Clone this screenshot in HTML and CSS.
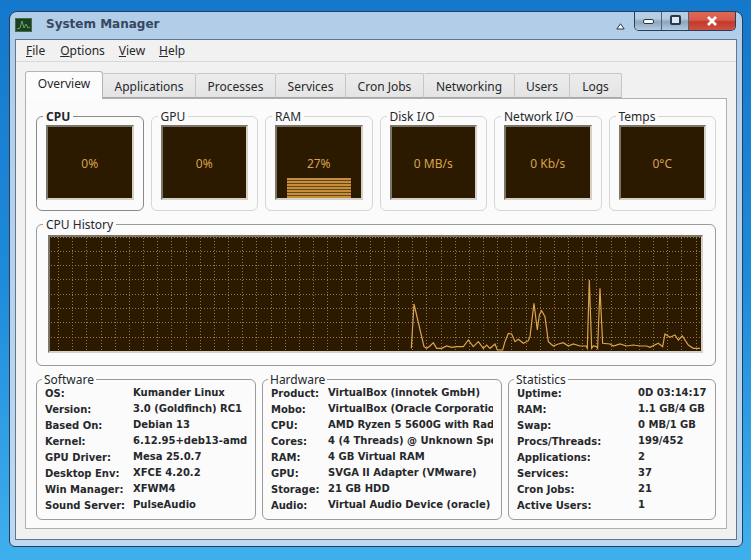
FILE: index.html
```html
<!DOCTYPE html>
<html lang="en">
<head>
    <meta charset="UTF-8">
    <title>System Manager</title>
    <link rel="stylesheet" href="styles.css">
</head>
<body>
    <div class="window">
        <header class="titlebar">
            <svg class="app-icon" width="17" height="14" viewBox="0 0 17 14">
                <rect width="17" height="14" fill="#3f6b45"/>
                <rect x="1" y="1" width="15" height="12" fill="#1d3d24"/>
                <polyline points="2,11 5,10 7,3 9,10 11,6 13,10 15,9" fill="none" stroke="#5fae5f" stroke-width="1"/>
            </svg>
            <span class="title">System Manager</span>
            <svg class="rollup" width="9" height="7" viewBox="0 0 9 7">
                <path d="M4.5 .8 8.2 6H.8z" fill="#fff" stroke="#26384c" stroke-width="1"/>
            </svg>
            <div class="controls">
                <button class="ctl"><span class="ctl-min"></span></button>
                <button class="ctl"><span class="ctl-max"></span></button>
                <button class="ctl ctl-close">
                    <svg width="12" height="10" viewBox="0 0 12 10">
                        <path d="M2 1 10 9M10 1 2 9" stroke="#fff" stroke-width="2.6"/>
                    </svg>
                </button>
            </div>
        </header>

        <div class="client">
            <nav class="menubar">
                <a><u>F</u>ile</a>
                <a><u>O</u>ptions</a>
                <a><u>V</u>iew</a>
                <a><u>H</u>elp</a>
            </nav>

            <div class="tabs">
                <button class="tab active">Overview</button>
                <button class="tab w-apps">Applications</button>
                <button class="tab w-proc">Processes</button>
                <button class="tab w-serv">Services</button>
                <button class="tab w-cron">Cron Jobs</button>
                <button class="tab w-net">Networking</button>
                <button class="tab w-users">Users</button>
                <button class="tab w-logs">Logs</button>
            </div>

            <main class="panel">
                <section class="gauges">
                    <fieldset class="group focus">
                        <legend>CPU</legend>
                        <div class="gauge"><span>0%</span></div>
                    </fieldset>
                    <fieldset class="group">
                        <legend>GPU</legend>
                        <div class="gauge"><span>0%</span></div>
                    </fieldset>
                    <fieldset class="group">
                        <legend>RAM</legend>
                        <div class="gauge"><div class="level"></div><span>27%</span></div>
                    </fieldset>
                    <fieldset class="group">
                        <legend>Disk I/O</legend>
                        <div class="gauge"><span>0 MB/s</span></div>
                    </fieldset>
                    <fieldset class="group">
                        <legend>Network I/O</legend>
                        <div class="gauge"><span>0 Kb/s</span></div>
                    </fieldset>
                    <fieldset class="group">
                        <legend>Temps</legend>
                        <div class="gauge"><span>0°C</span></div>
                    </fieldset>
                </section>

                <fieldset class="group history">
                    <legend>CPU History</legend>
                    <div class="chart">
                        <svg width="651" height="114" viewBox="2 2 651 114">
                            <path fill="none" stroke="#987840" stroke-dasharray="1 2"
                                d="M10.5 0V118M24.5 0V118M38.5 0V118M53.5 0V118M67.5 0V118M81.5 0V118M95.5 0V118M109.5 0V118M123.5 0V118M138.5 0V118M152.5 0V118M166.5 0V118M180.5 0V118M194.5 0V118M208.5 0V118M223.5 0V118M237.5 0V118M251.5 0V118M265.5 0V118M279.5 0V118M293.5 0V118M308.5 0V118M322.5 0V118M336.5 0V118M350.5 0V118M364.5 0V118M378.5 0V118M393.5 0V118M407.5 0V118M421.5 0V118M435.5 0V118M449.5 0V118M463.5 0V118M478.5 0V118M492.5 0V118M506.5 0V118M520.5 0V118M534.5 0V118M548.5 0V118M563.5 0V118M577.5 0V118M591.5 0V118M605.5 0V118M619.5 0V118M633.5 0V118M648.5 0V118
                                   M0 2.5H655M0 16.5H655M0 30.5H655M0 44.5H655M0 59.5H655M0 73.5H655M0 87.5H655M0 102.5H655M0 116.5H655"/>
                            <!-- traced from the history, x/y are at 3x -->
                            <polyline transform="translate(332 -15) scale(.3333)" vector-effect="non-scaling-stroke" fill="none" stroke="#dca44e" stroke-width="1.2"
                                points="94,385 102,252 132,380 140,385 150,378 160,368 170,385 185,385 200,378 215,382 230,380 250,380 265,360 280,380 295,365 310,385 320,375 330,385 345,372 352,390 368,390 375,365 385,340 395,342 405,365 415,358 430,370 445,362 450,350 462,250 472,330 478,285 485,272 495,290 505,365 520,378 535,372 550,368 565,378 580,372 600,378 618,378 622,385 628,180 635,385 640,378 650,380 653,385 660,205 668,370 690,372 700,378 720,372 740,378 760,375 780,378 800,378 810,382 835,370 848,380 855,342 870,352 885,345 895,360 907,348 925,375 940,385 960,385"/>
                        </svg>
                    </div>
                </fieldset>

                <section class="details">
                    <fieldset class="group info-group">
                        <legend>Software</legend>
                        <div class="info info-sw">
                            <b>OS:</b><span>Kumander Linux</span>
                            <b>Version:</b><span>3.0 (Goldfinch) RC1</span>
                            <b>Based On:</b><span>Debian 13</span>
                            <b>Kernel:</b><span>6.12.95+deb13-amd</span>
                            <b>GPU Driver:</b><span>Mesa 25.0.7</span>
                            <b>Desktop Env:</b><span>XFCE 4.20.2</span>
                            <b>Win Manager:</b><span>XFWM4</span>
                            <b>Sound Server:</b><span>PulseAudio</span>
                        </div>
                    </fieldset>
                    <fieldset class="group info-group">
                        <legend>Hardware</legend>
                        <div class="info info-hw">
                            <b>Product:</b><span>VirtualBox (innotek GmbH)</span>
                            <b>Mobo:</b><span>VirtualBox (Oracle Corporation)</span>
                            <b>CPU:</b><span>AMD Ryzen 5 5600G with Radeon Graphics</span>
                            <b>Cores:</b><span>4 (4 Threads) @ Unknown Speed</span>
                            <b>RAM:</b><span>4 GB Virtual RAM</span>
                            <b>GPU:</b><span>SVGA II Adapter (VMware)</span>
                            <b>Storage:</b><span>21 GB HDD</span>
                            <b>Audio:</b><span>Virtual Audio Device (oracle)</span>
                        </div>
                    </fieldset>
                    <fieldset class="group info-group">
                        <legend>Statistics</legend>
                        <div class="info info-st">
                            <b>Uptime:</b><span>0D 03:14:17</span>
                            <b>RAM:</b><span>1.1 GB/4 GB</span>
                            <b>Swap:</b><span>0 MB/1 GB</span>
                            <b>Procs/Threads:</b><span>199/452</span>
                            <b>Applications:</b><span>2</span>
                            <b>Services:</b><span>37</span>
                            <b>Cron Jobs:</b><span>21</span>
                            <b>Active Users:</b><span>1</span>
                        </div>
                    </fieldset>
                </section>
            </main>
        </div>
    </div>
</body>
</html>
```

FILE: styles.css
```css
* {
    margin: 0;
    padding: 0;
    box-sizing: border-box;
}
:root {
    --frame: #b2cde8;
    --frame-dark: #24405c;
    --gauge-bg: #2b1900;
    --gauge-text: #d9a24e;
    --text: #26282b;
}
body {
    width: 751px;
    height: 560px;
    overflow: hidden;
    padding: 11px 8px 13px 9px;
    background: linear-gradient(180deg, #1478cc 0%, #1f8ada 50%, #3fb0ee 100%);
    font-family: "Noto Sans", sans-serif;
    font-size: 12px;
    color: var(--text);
}
.window {
    width: 734px;
    height: 536px;
    display: flex;
    flex-direction: column;
    background: linear-gradient(180deg, var(--frame) 0%, #c0d8ef 100%);
    border: 1px solid var(--frame-dark);
    border-radius: 8px 8px 6px 6px;
}
.titlebar {
    height: 27px;
    flex: none;
    display: flex;
    align-items: flex-start;
    padding: 0 6px 0 5px;
}
.app-icon {
    margin-top: 6px;
}
.title {
    margin: 5px 0 0 14px;
    font-family: "DejaVu Sans", sans-serif;
    font-weight: bold;
    font-size: 12px;
    line-height: 15px;
    color: #34485f;
}
.rollup {
    margin: 11px 9px 0 auto;
}
.controls {
    display: flex;
    height: 19px;
    border: 1px solid var(--frame-dark);
    border-top: none;
    border-radius: 0 0 5px 5px;
    overflow: hidden;
}
.ctl {
    width: 27px;
    display: flex;
    align-items: center;
    justify-content: center;
    border: none;
    border-right: 1px solid #4a647e;
    background: linear-gradient(180deg, #b6cde4 0%, #b6cde4 35%, #8fa5ba 55%, #b2cae2 100%);
}
.ctl-close {
    width: 46px;
    border-right: none;
    background: linear-gradient(180deg, #de6a55 0%, #d9584a 45%, #c13a2c 55%, #d05040 100%);
}
.ctl-min {
    width: 11px;
    height: 5px;
    background: #fff;
    border: 1px solid #26384c;
    border-radius: 2px;
}
.ctl-max {
    width: 11px;
    height: 10px;
    margin-bottom: 3px;
    background: #dfe8f0;
    border: 2px solid #26384c;
    border-radius: 2px;
}
.client {
    width: 722px;
    height: 501px;
    margin-left: 5px;
    background: #f1f1f1;
    border: 1px solid #5f7890;
}
.menubar {
    height: 22px;
    display: flex;
    gap: 14px;
    padding-left: 10px;
    line-height: 22px;
    border-bottom: 1px solid #d8d8d8;
}
.menubar a:nth-child(2) {
    margin-left: 1px;
}
.tabs {
    display: flex;
    align-items: flex-end;
    height: 36px;
    padding-left: 9px;
}
.tab {
    height: 25px;
    flex: none;
    padding-top: 2px;
    font-family: inherit;
    font-size: 12px;
    color: var(--text);
    background: linear-gradient(180deg, #ececec, #e4e4e4);
    border: 1px solid #c6c6c6;
    border-bottom: 1px solid #a9a9a9;
    border-left: none;
    border-radius: 2px 2px 0 0;
}
.tab.active {
    width: 78px;
    height: 28px;
    position: relative;
    top: 1px;
    padding: 0 0 4px;
    background: #fcfcfc;
    border: 1px solid #b4b4b4;
    border-bottom: none;
    border-radius: 3px 3px 0 0;
}
.w-apps { width: 93px; }
.w-proc { width: 80px; }
.w-serv { width: 70px; }
.w-cron { width: 78px; }
.w-net { width: 91px; }
.w-users { width: 55px; }
.w-logs { width: 52px; }
.panel {
    width: 702px;
    height: 431px;
    margin-left: 9px;
    padding: 0 10px;
    background: #fbfbfb;
    border: 1px solid #b0b0b0;
}
.group {
    border: 1px solid #d6d6d6;
    border-radius: 6px;
    min-width: 0;
}
.group.focus {
    border-color: #8a8a8a;
}
.group legend {
    padding: 2px 3px 0;
    line-height: 16px;
}
.group.focus legend {
    font-weight: bold;
}
.gauges {
    display: grid;
    grid-template-columns: repeat(6, 1fr);
    gap: 7px;
    margin-top: 8px;
}
.gauges .group {
    height: 104px;
    padding: 0 9px;
}
.gauges legend {
    margin-left: -3px;
}
.gauge {
    height: 75px;
    display: grid;
    background: var(--gauge-bg);
    border: 2px solid;
    border-color: #7c766a #d6d1c6 #d6d1c6 #7c766a;
    color: var(--gauge-text);
}
.gauge > * {
    grid-area: 1 / 1;
}
.gauge span {
    align-self: center;
    justify-self: center;
    margin-top: 1px;
}
.level {
    align-self: end;
    justify-self: center;
    width: 64px;
    height: 20px;
    background: repeating-linear-gradient(180deg, #c48f3c 0, #c48f3c 2px, #6b4514 2px, #6b4514 3px);
}
.history {
    height: 151px;
    margin-top: 4px;
    padding: 2px 12px 0 11px;
    border-color: #9a9a9a;
}
.history legend {
    margin-left: -5px;
}
.chart {
    width: 655px;
    height: 118px;
    background: var(--gauge-bg);
    border: 2px solid;
    border-color: #7c766a #d6d1c6 #d6d1c6 #7c766a;
}
.chart svg {
    display: block;
}
.details {
    display: flex;
    gap: 6px;
    margin-top: 4px;
}
.info-group {
    height: 150px;
    border-color: #9a9a9a;
}
.info-group legend {
    margin-left: 5px;
    padding: 2px 2px 0;
}
.info-group:nth-child(1) { width: 220px; }
.info-group:nth-child(2) { width: 240px; }
.info-group:nth-child(3) { width: 208px; }
.info {
    display: grid;
    grid-auto-rows: 16px;
    font-family: "DejaVu Sans", sans-serif;
    font-size: 10px;
    line-height: 14px;
    font-weight: bold;
    margin-top: -2px;
    padding-left: 8px;
}
.info b {
    padding-top: 1px;
    white-space: nowrap;
}
.info span {
    white-space: nowrap;
    overflow: hidden;
}
.info-sw { grid-template-columns: 88px 1fr; }
.info-hw { grid-template-columns: 57px 165px; }
.info-st { grid-template-columns: 121px 1fr; }
```
